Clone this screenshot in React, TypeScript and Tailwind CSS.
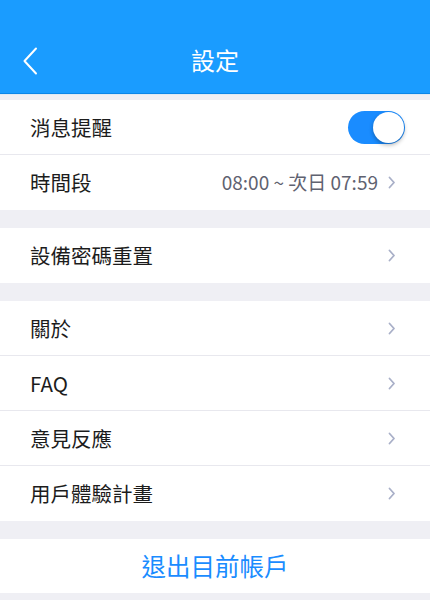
import React from "react";

const font = { fontFamily: '"Noto Sans CJK TC", "Noto Sans", sans-serif' };

function Chevron() {
  return (
    <svg width="8" height="13" viewBox="0 0 8 13" className="shrink-0">
      <path d="M1.5 1.5 L6 6.5 L1.5 11.5" fill="none" stroke="#a9b0c8" strokeWidth="1.8" strokeLinecap="round" strokeLinejoin="round" />
    </svg>
  );
}

function Row({ label, right, chevron = true, border = true }: { label: string; right?: React.ReactNode; chevron?: boolean; border?: boolean }) {
  return (
    <div className={`h-[55px] flex items-center pl-[30px] pr-[34px] bg-white ${border ? "border-b border-[#e8e8ee]" : ""}`}>
      <span className="flex-1 text-[20.5px] text-[#1c1c1c]">{label}</span>
      {right}
      {chevron && <Chevron />}
    </div>
  );
}

export default function App() {
  return (
    <div className="w-[430px] h-[600px] bg-[#efeff4] overflow-hidden" style={font}>
      <div className="h-[93px] bg-[#1a9cff] pt-[39px]">
        <div className="h-[44px] relative flex items-center justify-center">
          <svg width="16" height="28" viewBox="0 0 16 28" className="absolute left-[22px] top-[8px]">
            <path d="M14 1.5 L2.5 14 L14 26.5" fill="none" stroke="white" strokeWidth="2" strokeLinecap="round" strokeLinejoin="round" />
          </svg>
          <span className="text-white text-[24px] leading-none -mt-[2px]">設定</span>
        </div>
      </div>
      <div className="h-px bg-[#0a86e8]" />
      <div className="h-px bg-[#dfe9f3]" />
      <div className="h-[5px]" />
      <div>
        <div className="h-[55px] flex items-center pl-[30px] pr-[25px] bg-white border-b border-[#e8e8ee]">
          <span className="flex-1 text-[20.5px] text-[#1c1c1c]">消息提醒</span>
          <div className="w-[57px] h-[33px] rounded-full bg-[#1a8cff] relative">
            <div className="absolute right-[1px] top-[1px] w-[31px] h-[31px] rounded-full bg-white shadow-[0_2px_4px_rgba(0,0,0,0.3)]" />
          </div>
        </div>
        <Row label="時間段" border={false} right={<span className="text-[19px] text-[#5f6270] mr-[10px]">08:00 ~ 次日 07:59</span>} />
      </div>
      <div className="h-[18px]" />
      <Row label="設備密碼重置" border={false} />
      <div className="h-[18px]" />
      <Row label="關於" />
      <Row label="FAQ" />
      <Row label="意見反應" />
      <Row label="用戶體驗計畫" border={false} />
      <div className="h-[18px]" />
      <div className="h-[54px] bg-white flex items-center justify-center">
        <span className="text-[24.5px] text-[#1a8cff]">退出目前帳戶</span>
      </div>
    </div>
  );
}
